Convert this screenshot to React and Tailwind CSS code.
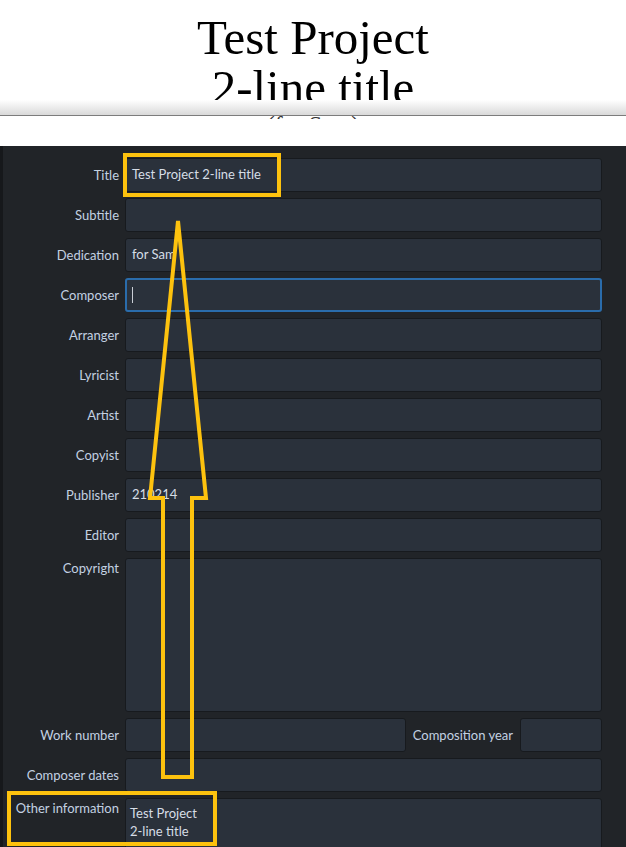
import React from "react";

const labelCls = "text-right text-[13px] leading-[18px] text-[#c3d1e2] whitespace-nowrap";
const boxBase = "rounded-[3px] bg-[#2a313b] text-[13px] text-[#d6dde6]";
const boxCls = `${boxBase} border border-[#171a1e]`;

const Field = ({ value, focused }) => (
  <div
    className={`${boxBase} h-[34px] flex items-center ${
      focused ? "border-2 border-[#2a6cab] pl-[5px]" : "border border-[#171a1e] pl-[6px]"
    }`}
  >
    {value}
    {focused && <span className="w-px h-[16px] bg-[#c9ced6]" />}
  </div>
);

const rows = [
  ["Title", "Test Project 2-line title"],
  ["Subtitle", ""],
  ["Dedication", "for Sam"],
  ["Composer", "", true],
  ["Arranger", ""],
  ["Lyricist", ""],
  ["Artist", ""],
  ["Copyist", ""],
  ["Publisher", "210214"],
  ["Editor", ""],
];

export default function App() {
  return (
    <div className="relative w-[626px] h-[847px] overflow-hidden bg-white flex flex-col font-['Lato',sans-serif]">
      {/* Score preview */}
      <div className="shrink-0 h-[100px] overflow-hidden pt-[13px] text-center font-['Liberation_Serif',serif] text-[49px] leading-[50px] text-black">
        <p>Test Project</p>
        <p>2-line title</p>
      </div>
      <div className="shrink-0 h-[15px] bg-gradient-to-b from-white to-[#d9d9d9]" />
      <div className="shrink-0 h-px bg-[#7c7c7c]" />
      <div className="shrink-0 h-[30px]">
        <div className="h-[3px] overflow-hidden text-center">
          <p className="-mt-[4px] font-['Liberation_Serif',serif] text-[24px] leading-none text-[#333]">(for Sam)</p>
        </div>
      </div>

      {/* Properties panel */}
      <div className="flex-1 flex bg-[#212428]">
        <div className="w-[3px] bg-[#16181b]" />
        <div className="flex-1 grid grid-cols-[104px_1fr] gap-x-[6px] gap-y-[6px] pl-[12px] pr-[24px] pt-[12px] content-start">
          {rows.map(([label, value, focused]) => (
            <React.Fragment key={label}>
              <div className={`${labelCls} self-center`}>{label}</div>
              <Field value={value} focused={focused} />
            </React.Fragment>
          ))}

          <div className={`${labelCls} self-start pt-px`}>Copyright</div>
          <div className={`${boxCls} h-[154px]`} />

          <div className={`${labelCls} self-center`}>Work number</div>
          <div className="flex items-center gap-[7px]">
            <div className={`${boxCls} h-[34px] flex-1`} />
            <span className={labelCls}>Composition year</span>
            <div className={`${boxCls} h-[34px] w-[82px]`} />
          </div>

          <div className={`${labelCls} self-center`}>Composer dates</div>
          <Field value="" />

          <div className={`${labelCls} self-start pt-px`}>Other information</div>
          <div className={`${boxCls} h-[90px] pl-[4px] pt-[5px] leading-[18px]`}>
            <p>Test Project</p>
            <p>2-line title</p>
          </div>
        </div>
      </div>

      {/* Annotation overlay */}
      <svg className="absolute inset-0 pointer-events-none" width="626" height="847" viewBox="0 0 626 847">
        <g fill="none" stroke="#fdc20e" strokeWidth="4" strokeLinejoin="miter">
          <rect x="125" y="155" width="154" height="40" />
          <rect x="9" y="793" width="206" height="51" />
          <polygon points="178,221 150,498 163,498 163,777 192,777 192,498 206,498" />
        </g>
      </svg>
    </div>
  );
}
